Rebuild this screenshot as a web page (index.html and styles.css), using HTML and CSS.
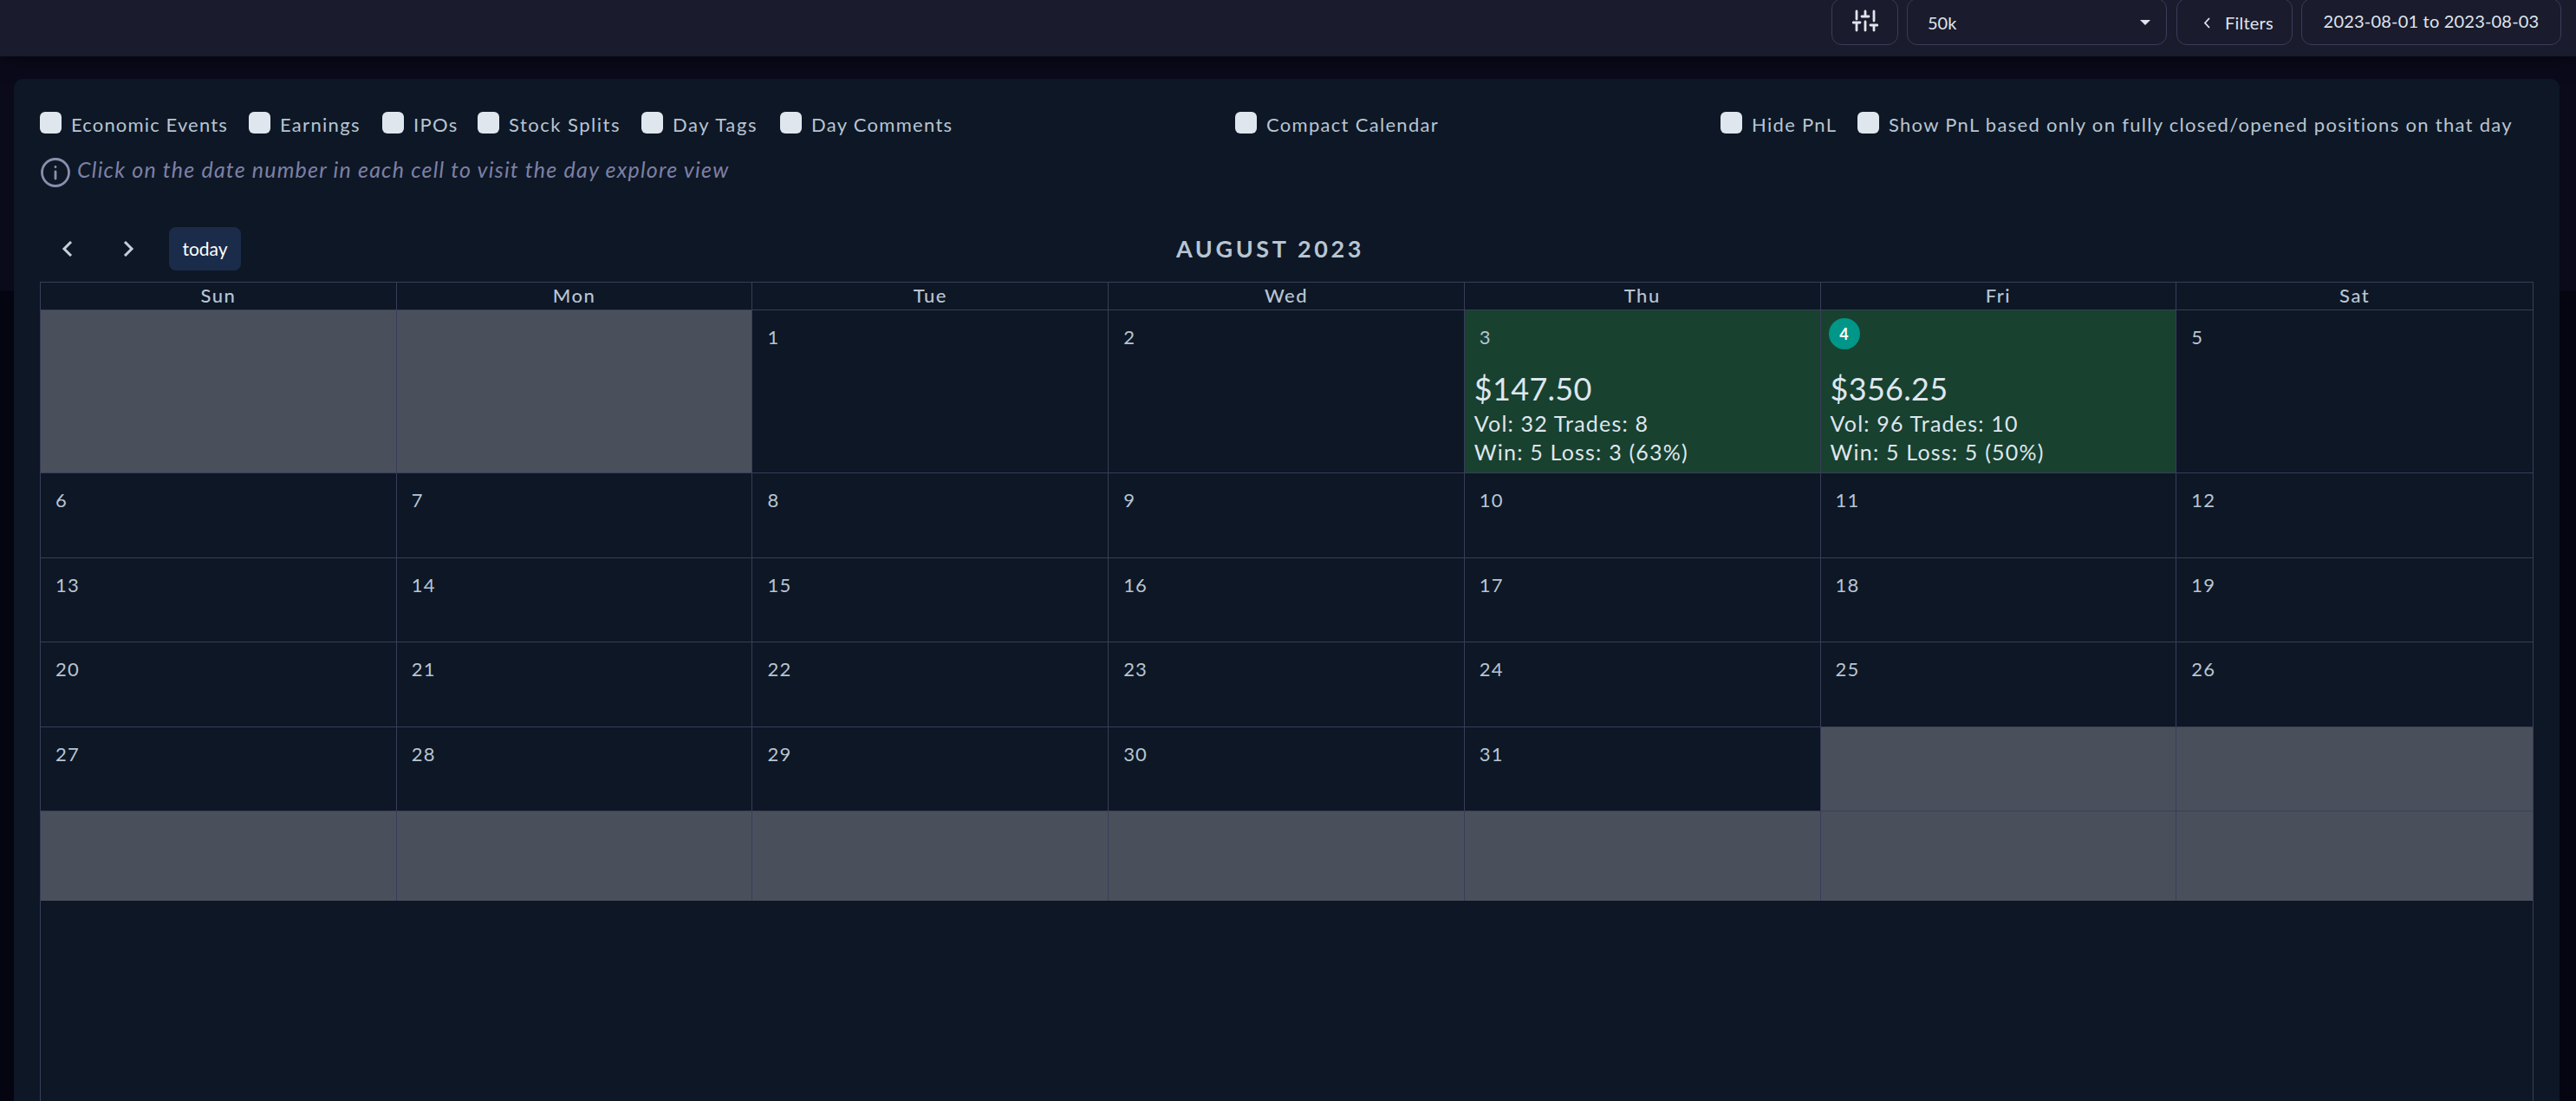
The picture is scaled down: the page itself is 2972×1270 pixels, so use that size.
FILE: index.html
```html
<!DOCTYPE html>
<html lang="en">
<head>
  <meta charset="UTF-8">
  <title>Calendar</title>
  <link rel="stylesheet" href="styles.css">
</head>
<body>

  <header class="topbar">
    <button class="box box-icon" aria-label="Settings">
      <svg width="30" height="26" viewBox="0 0 30 26" fill="none" stroke="#dfe5ee" stroke-width="2.8" stroke-linecap="round">
        <path d="M5 2v9M5 15v9M1 15h8M15 2v6M11 8h8M15 14v10M25 2v11M25 18v6M21 18h8"/>
      </svg>
    </button>
    <button class="box box-select">50k <span class="caret"></span></button>
    <button class="box box-filters">
      <svg width="8" height="13" viewBox="0 0 8 13" fill="none" stroke="#dfe5ee" stroke-width="1.8"><path d="M7 1L2 6.500L7 12"/></svg>
      Filters
    </button>
    <button class="box box-dates">2023-08-01 to 2023-08-03</button>
  </header>

  <main class="panel">
    <div class="options">
      <div class="option-group">
        <label class="option opt-economic"><i class="check"></i>Economic Events</label>
        <label class="option opt-earnings"><i class="check"></i>Earnings</label>
        <label class="option opt-ipos"><i class="check"></i>IPOs</label>
        <label class="option opt-splits"><i class="check"></i>Stock Splits</label>
        <label class="option opt-tags"><i class="check"></i>Day Tags</label>
        <label class="option"><i class="check"></i>Day Comments</label>
      </div>
      <div class="option-group group-center">
        <label class="option"><i class="check"></i>Compact Calendar</label>
      </div>
      <div class="option-group group-right">
        <label class="option opt-hide"><i class="check"></i>Hide PnL</label>
        <label class="option opt-show"><i class="check"></i>Show PnL based only on fully closed/opened positions on that day</label>
      </div>
    </div>

    <p class="hint">
      <svg width="36" height="36" viewBox="0 0 36 36" fill="none" stroke="#8a8fac" stroke-width="2.8" stroke-linecap="round">
        <circle cx="18" cy="18" r="15.500"/>
        <path d="M18 17v8M18 11.500v.2"/>
      </svg>
      <span>Click on the date number in each cell to visit the day explore view</span>
    </p>

    <div class="toolbar">
      <div class="toolbar-left">
        <button class="nav" aria-label="Previous"><svg width="14" height="18" viewBox="0 0 14 18"><path d="M11 1L3 9L11 17"/></svg></button>
        <button class="nav" aria-label="Next"><svg width="14" height="18" viewBox="0 0 14 18"><path d="M2 1L10 9L2 17"/></svg></button>
        <button class="today">today</button>
      </div>
      <h2 class="title">AUGUST 2023</h2>
    </div>

    <div class="calendar">
      <div class="week head">
        <div>Sun</div><div>Mon</div><div>Tue</div><div>Wed</div><div>Thu</div><div>Fri</div><div>Sat</div>
      </div>
      <div class="week tall">
        <div class="day off"></div>
        <div class="day off"></div>
        <div class="day">1</div>
        <div class="day">2</div>
        <div class="day win">3
          <div class="stats">
            <div class="pnl">$147.50</div>
            <div>Vol: 32 Trades: 8</div>
            <div>Win: 5 Loss: 3 (63%)</div>
          </div>
        </div>
        <div class="day win">
          <span class="current">4</span>
          <div class="stats">
            <div class="pnl">$356.25</div>
            <div>Vol: 96 Trades: 10</div>
            <div>Win: 5 Loss: 5 (50%)</div>
          </div>
        </div>
        <div class="day">5</div>
      </div>
      <div class="week">
        <div class="day">6</div><div class="day">7</div><div class="day">8</div><div class="day">9</div><div class="day">10</div><div class="day">11</div><div class="day">12</div>
      </div>
      <div class="week short">
        <div class="day">13</div><div class="day">14</div><div class="day">15</div><div class="day">16</div><div class="day">17</div><div class="day">18</div><div class="day">19</div>
      </div>
      <div class="week">
        <div class="day">20</div><div class="day">21</div><div class="day">22</div><div class="day">23</div><div class="day">24</div><div class="day">25</div><div class="day">26</div>
      </div>
      <div class="week short">
        <div class="day">27</div><div class="day">28</div><div class="day">29</div><div class="day">30</div><div class="day">31</div><div class="day off"></div><div class="day off"></div>
      </div>
      <div class="week last">
        <div class="day off"></div><div class="day off"></div><div class="day off"></div><div class="day off"></div><div class="day off"></div><div class="day off"></div><div class="day off"></div>
      </div>
    </div>
  </main>

</body>
</html>
```

FILE: styles.css
```css
* {
  box-sizing: border-box;
}

body {
  margin: 0;
  height: 1270px;
  overflow: hidden;
  display: flex;
  flex-direction: column;
  background: linear-gradient(#0a0a1b 0, #0a0a1b 335px, #040511 336px);
  color: #b7c5d3;
  font-family: Lato, sans-serif;
  font-size: 22px;
}

button {
  font-family: inherit;
  color: inherit;
  background: none;
  border: none;
  padding: 0;
}

/* top bar */
.topbar {
  height: 65px;
  flex: none;
  display: flex;
  align-items: flex-start;
  justify-content: flex-end;
  padding-right: 17px;
  background: #1a1b2c;
  box-shadow: 0 2px 20px rgba(0, 0, 0, 0.5);
}

.box {
  display: flex;
  align-items: center;
  height: 54px;
  margin-top: -2px;
  border: 1px solid #3b3b5c;
  border-radius: 12px;
  color: #dfe5ee;
  font-size: 20px;
}

.box-icon {
  width: 77px;
  justify-content: center;
  padding-bottom: 2px;
  margin-right: 10px;
}

.box-select {
  width: 300px;
  justify-content: space-between;
  padding: 2px 18px 0 23px;
  margin-right: 11px;
}

.caret {
  border: 6px solid transparent;
  border-top-color: #dfe5ee;
  border-bottom: 0;
}

.box-filters {
  width: 134px;
  gap: 17px;
  padding: 2px 0 0 30px;
  margin-right: 10px;
  letter-spacing: 0.2px;
}

.box-dates {
  width: 300px;
  justify-content: center;
  padding-bottom: 3px;
  letter-spacing: 0.2px;
}

/* panel */
.panel {
  flex: 1;
  display: flex;
  flex-direction: column;
  margin: 26px 19px 0 16px;
  padding: 38px 30px 0;
  background: #0e1725;
  border-radius: 10px 10px 0 0;
}

.options {
  display: flex;
  height: 25px;
}

.option-group {
  display: flex;
  width: 1379px;
}

.group-center {
  width: 560px;
}

.group-right {
  width: auto;
}

.option {
  display: flex;
  gap: 11px;
  line-height: 29px;
  letter-spacing: 1.3px;
  white-space: nowrap;
}

.opt-economic { width: 241px; letter-spacing: 1.15px; }
.opt-earnings { width: 154px; }
.opt-ipos { width: 110px; }
.opt-splits { width: 189px; letter-spacing: 1.5px; }
.opt-tags { width: 160px; letter-spacing: 1.6px; }
.opt-hide { width: 158px; }

.check {
  flex: none;
  width: 25px;
  height: 25px;
  border-radius: 6px;
  background: #dfe6ee;
}

.hint {
  display: flex;
  gap: 7px;
  height: 36px;
  margin: 27px 0 0;
  color: #7d80a5;
  font-size: 25px;
  font-style: italic;
  line-height: 29px;
  letter-spacing: 1.2px;
}

/* toolbar */
.toolbar {
  display: flex;
  align-items: center;
  height: 50px;
  margin: 45px 0 13px;
}

.toolbar-left {
  display: flex;
  align-items: center;
  width: 1311px;
}

.nav {
  display: flex;
  justify-content: center;
  width: 71px;
  margin-left: -4px;
  margin-right: 4px;
}

.nav svg {
  fill: none;
  stroke: #c5ced9;
  stroke-width: 3;
}

.today {
  width: 83px;
  height: 50px;
  margin-left: 7px;
  padding-bottom: 2px;
  border-radius: 8px;
  background: #1b2c4a;
  color: #fff;
  font-size: 21px;
}

.title {
  margin: 0;
  font-size: 27px;
  font-weight: 700;
  line-height: 32px;
  padding-bottom: 1px;
  letter-spacing: 3.6px;
}

/* calendar grid */
.calendar {
  flex: 1;
  border: 1px solid #3a3c5a;
  border-bottom: none;
}

.week {
  display: grid;
  grid-template-columns: repeat(7, 1fr);
  height: 98px;
  border-bottom: 1px solid #3a3c5a;
}

.week > div:not(:last-child) {
  border-right: 1px solid #3a3c5a;
}

.week.head {
  height: 32px;
  text-align: center;
  line-height: 29px;
  font-weight: 500;
  letter-spacing: 1.5px;
}

.week.tall {
  height: 188px;
}

.week.short {
  height: 97px;
}

.week.last {
  height: 103px;
  border-bottom: none;
}

.day {
  padding: 17px 0 0 17px;
  line-height: 27px;
  letter-spacing: 1.2px;
}

.off {
  background: #4a505b;
}

.win {
  background: #18412f;
}

.stats {
  margin: 24px 0 0 -6px;
  color: #dfe6ee;
  font-size: 25px;
  line-height: 33px;
  letter-spacing: 1.2px;
}

.pnl {
  margin-bottom: 2px;
  font-size: 36px;
  line-height: 44px;
  letter-spacing: 0.3px;
}

.current {
  display: block;
  width: 36px;
  height: 36px;
  margin: -8px 0 -1px -8px;
  border-radius: 50%;
  background: #009688;
  color: #fff;
  font-size: 18px;
  font-weight: 700;
  line-height: 36px;
  letter-spacing: 0;
  text-align: center;
}
```
